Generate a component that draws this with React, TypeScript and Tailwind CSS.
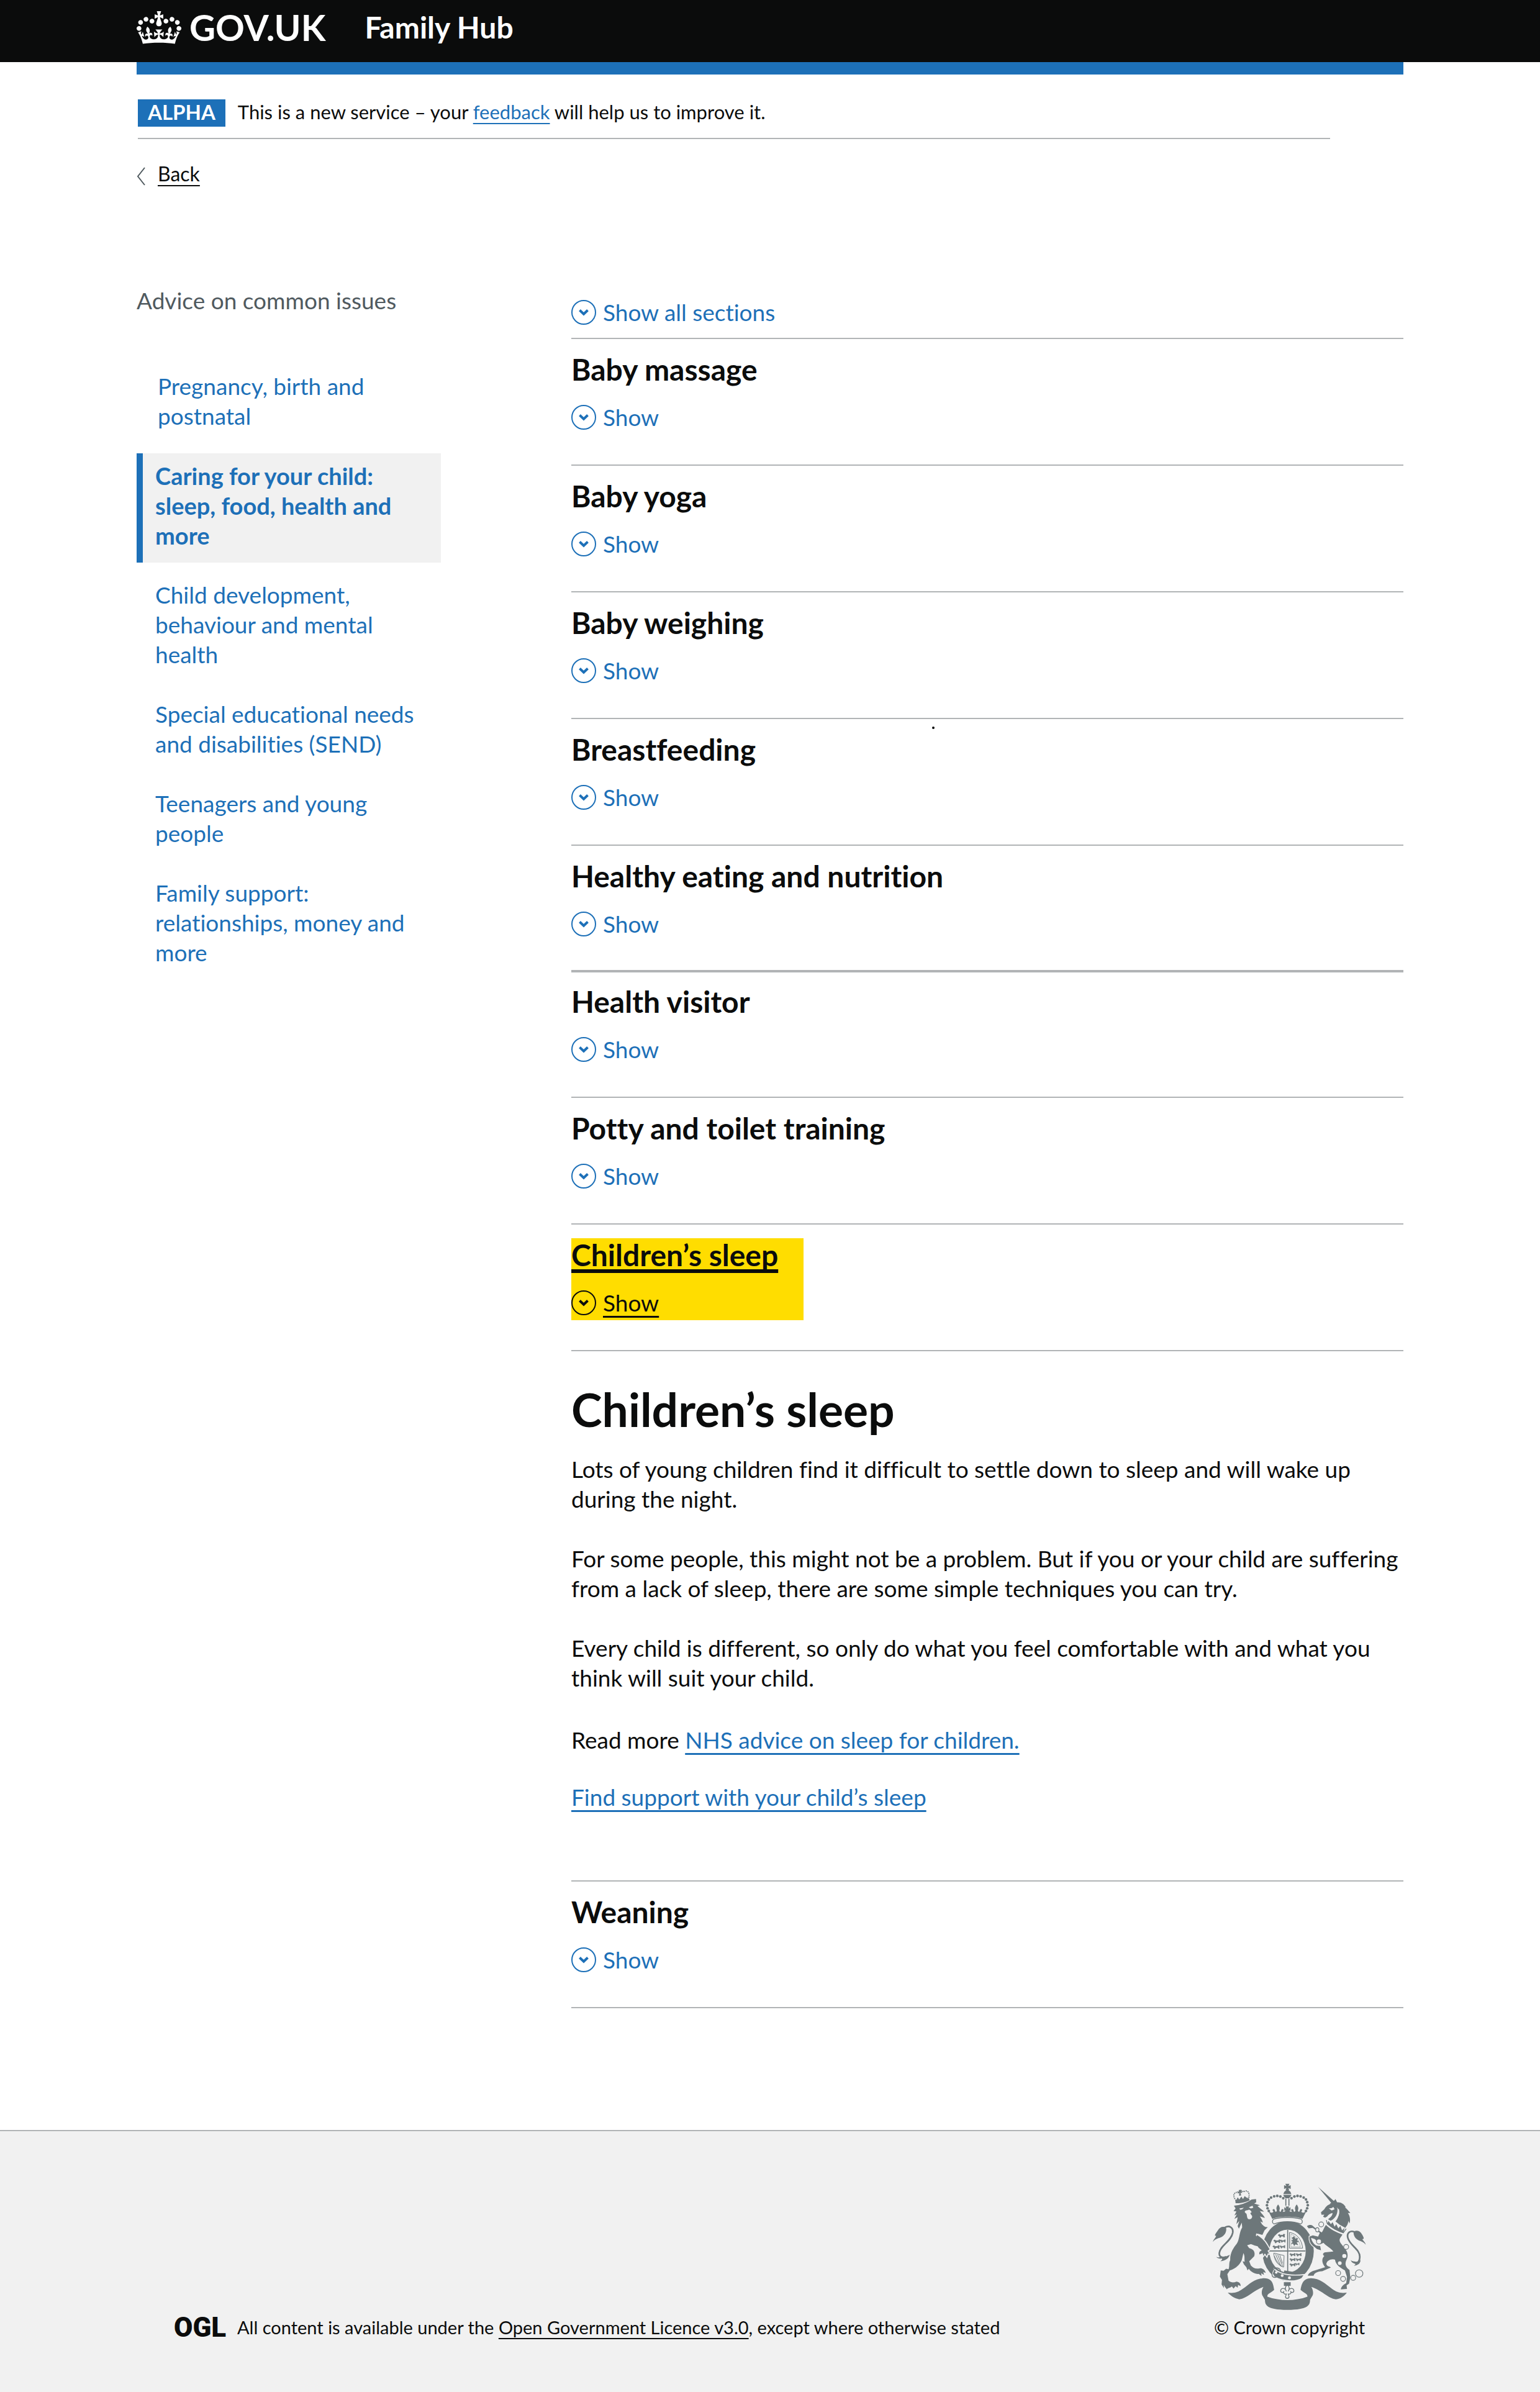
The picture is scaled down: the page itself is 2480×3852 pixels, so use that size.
import type { ReactNode } from "react";

type Topic = { title: string; focused?: boolean; heavyRule?: boolean; tight?: boolean; mark?: boolean };

const topics: Topic[] = [
  { title: "Baby massage" },
  { title: "Baby yoga" },
  { title: "Baby weighing" },
  { title: "Breastfeeding", mark: true },
  { title: "Healthy eating and nutrition", tight: true },
  { title: "Health visitor", heavyRule: true },
  { title: "Potty and toilet training" },
  { title: "Children’s sleep", focused: true },
];

const adviceLinks = [
  "Pregnancy, birth and postnatal",
  "Caring for your child: sleep, food, health and more",
  "Child development, behaviour and mental health",
  "Special educational needs and disabilities (SEND)",
  "Teenagers and young people",
  "Family support: relationships, money and more",
];

function CrownLogo() {
  return (
    <svg viewBox="0 0 132 97" className="mt-1 h-[53px] w-[72px] shrink-0" fill="currentColor" fillRule="evenodd" aria-hidden="true">
      <path d="M25 30.2c3.5 1.5 7.7-.2 9.1-3.7 1.5-3.6-.2-7.8-3.9-9.2-3.6-1.4-7.6.3-9.1 3.9-1.4 3.5.3 7.5 3.9 9zM9 39.5c3.6 1.5 7.8-.2 9.2-3.7 1.5-3.6-.2-7.8-3.9-9.1-3.6-1.5-7.6.2-9.1 3.8-1.4 3.5.3 7.5 3.8 9zM4.4 57.2c3.5 1.5 7.7-.2 9.1-3.8 1.5-3.6-.2-7.7-3.9-9.1-3.5-1.5-7.6.3-9.1 3.8-1.4 3.5.3 7.6 3.9 9.1zm38.3-21.4c3.5 1.5 7.7-.2 9.1-3.8 1.5-3.6-.2-7.7-3.9-9.1-3.6-1.5-7.6.3-9.1 3.8-1.3 3.6.4 7.7 3.9 9.1zm64.4-5.6c-3.6 1.5-7.8-.2-9.1-3.7-1.5-3.6.2-7.8 3.8-9.2 3.6-1.4 7.7.3 9.2 3.9 1.3 3.5-.4 7.5-3.9 9zm15.9 9.3c-3.6 1.5-7.7-.2-9.1-3.7-1.5-3.6.2-7.8 3.7-9.1 3.6-1.5 7.7.2 9.2 3.8 1.5 3.5-.3 7.5-3.8 9zm4.7 17.7c-3.6 1.5-7.8-.2-9.2-3.8-1.5-3.6.2-7.7 3.9-9.1 3.6-1.5 7.7.3 9.2 3.8 1.3 3.5-.4 7.6-3.9 9.1zM89.3 35.8c-3.6 1.5-7.8-.2-9.2-3.8-1.4-3.6.2-7.7 3.9-9.1 3.6-1.5 7.7.3 9.2 3.8 1.4 3.6-.3 7.7-3.9 9.1zM69.7 17.7l8.9 4.7V9.3l-8.9 2.8c-.2-.3-.5-.6-.9-.9L72.4 0H59.6l3.5 11.2c-.3.3-.6.5-.9.9l-8.8-2.8v13.1l8.8-4.7c.3.3.6.7.9.9l-5 15.4v.1c-.2.8-.4 1.6-.4 2.4 0 4.1 3.1 7.5 7 8.1h.2c.3 0 .7.1 1 .1.4 0 .7 0 1-.1h.2c4-.6 7.1-4.1 7.1-8.1 0-.8-.1-1.7-.4-2.4V34l-5.1-15.4c.4-.2.7-.6 1-.9zM66 92.8c16.9 0 32.8 1.1 47.1 3.2 4-16.9 8.9-26.7 14-33.5l-9.6-3.4c1 4.9 1.1 7.2 0 10.2-1.5-1.4-3-4.3-4.2-8.7L108.6 76c2.8-2 5-3.2 7.5-3.3-4.4 9.4-10 11.9-13.6 11.2-4.3-.8-6.3-4.6-5.6-7.9 1-4.7 5.7-5.9 8-.5 4.3-8.7-3-11.4-7.6-8.8 7.1-7.2 7.9-13.5 2.1-21.1-8 6.1-8.1 12.3-4.5 20.8-4.7-5.4-12.1-2.5-9.5 6.2 3.4-5.2 7.9-2 7.2 3.1-.6 4.3-6.4 7.8-13.5 7.2-10.3-.9-10.9-8-11.2-13.8 2.5-.5 7.1 1.8 11 7.3L80.2 60c-4.1 4.4-8 5.3-12.3 5.4 1.4-4.4 8-11.6 8-11.6H55.5s6.4 7.2 7.9 11.6c-4.2-.1-8-1-12.3-5.4l1.4 16.4c3.9-5.5 8.5-7.7 10.9-7.3-.3 5.8-.9 12.8-11.1 13.8-7.2.6-12.9-2.9-13.5-7.2-.7-5 3.8-8.3 7.1-3.1 2.7-8.7-4.6-11.6-9.4-6.2 3.7-8.5 3.6-14.7-4.6-20.8-5.8 7.6-5 13.9 2.2 21.1-4.7-2.6-11.9.1-7.7 8.8 2.3-5.5 7.1-4.2 8.1.5.7 3.3-1.3 7.1-5.7 7.9-3.5.7-9-1.8-13.5-11.2 2.5.1 4.7 1.3 7.5 3.3l-4.7-15.4c-1.2 4.4-2.7 7.2-4.3 8.7-1.1-3-.9-5.3 0-10.2l-9.5 3.4c5 6.9 9.9 16.7 14 33.5 14.8-2.1 30.8-3.2 47.7-3.2z" />
    </svg>
  );
}

function ChevronCircle() {
  return (
    <svg viewBox="0 0 40 40" className="h-10 w-10 shrink-0" fill="none" stroke="currentColor" aria-hidden="true">
      <circle cx="20" cy="20" r="19" strokeWidth="2" />
      <path d="M13.5 16.5L20 22.8L26.5 16.5" strokeWidth="4" />
    </svg>
  );
}

const beads: [number, number][] = [
  [437, 178], [423, 170], [408, 167], [393, 169], [378, 175], [367, 184], [361, 197], [358, 212], [361, 227], [367, 240],
];

const lionPassant = "M0 4l6-4 5 4 12 0 4-5 6 2-3 5 2 7-5 1-2-5-10 0-3 6-5-1 2-7-4 1z";

function RoyalArms() {
  return (
    <svg viewBox="96 106 742 614" className="h-[204px] w-[247px]" fill="#6d777a" stroke="none" role="img" aria-label="Royal coat of arms">
      {/* motto scroll */}
      <path d="M168 636C200 640 218 634 240 618C275 592 300 566 345 566C384 567 388 592 393 622C372 640 358 642 360 655C420 677 495 677 554 655C556 642 542 640 521 622C526 592 534 567 571 566C614 566 640 592 674 618C696 634 714 640 745 636C734 652 716 666 692 668C655 664 620 622 573 608C580 620 584 634 580 648L567 670C566 696 560 718 457 719C354 718 350 696 348 670L335 648C330 634 334 620 341 608C296 622 262 664 224 668C202 665 184 652 168 636Z" />

      {/* garter and shield */}
      <ellipse cx="460" cy="434" rx="125" ry="146" />
      <ellipse cx="458" cy="434" rx="88" ry="104" fill="#f1f1f1" />
      <path d="M456 331h5v204h-5zM371 431h174v5H371z" />
      <path d="M442 528l38 6-2 12-38-8z" />
      <g fill="none" stroke="#6d777a" strokeWidth="3">
        <path d="M467 344c34 4 60 34 64 76h-64z" />
        <path d="M474 352c24 8 42 32 46 62h-46z" strokeWidth="1.5" />
        <path d="M391 444l50 12 -2 56c-28-8-46-32-48-68zM400 450l26 58M410 452l24 54M420 454l14 40M394 458c10 24 20 40 40 52" />
      </g>
      <path d="M478 370l12-8 6 12 12-4-4 12 10 8-12 2 8 14-14-4-6 8-6-12-10 4 8-12-6-8 8-2z" />
      <g stroke="#6d777a" strokeWidth="2.5">
        <path d={lionPassant} transform="translate(412 353)" />
        <path d={lionPassant} transform="translate(390 380)" />
        <path d={lionPassant} transform="translate(422 380) scale(.8)" />
        <path d={lionPassant} transform="translate(386 408)" />
        <path d={lionPassant} transform="translate(420 408) scale(.8)" />
        <path d={lionPassant} transform="translate(468 446) scale(.85)" />
        <path d={lionPassant} transform="translate(498 446) scale(.85)" />
        <path d={lionPassant} transform="translate(468 470) scale(.85)" />
        <path d={lionPassant} transform="translate(497 470) scale(.8)" />
        <path d={lionPassant} transform="translate(468 495) scale(.85)" />
        <path d={lionPassant} transform="translate(494 493) scale(.65)" />
      </g>

      {/* strap and buckle */}
      <path d="M392 520C420 545 470 556 540 548L528 566C500 584 440 584 394 560L384 544Z" stroke="#f1f1f1" strokeWidth="5" />
      <path d="M384 556C378 530 392 514 408 516C420 518 424 526 424 534M384 556C392 566 404 562 408 556" fill="none" stroke="#6d777a" strokeWidth="4" />
      <circle cx="403" cy="538" r="6" fill="#f1f1f1" />
      <circle cx="432" cy="553" r="7" fill="#f1f1f1" />
      <circle cx="467" cy="564" r="7" fill="#f1f1f1" />
      <path d="M440 585h33v18h-33z" />
      <path d="M457 597c-12 10-12 22-5 32-4-16-22-18-27-6-3 11 8 15 14 9-2 10 6 12 13 10 0 6-4 8-4 13a8 8 0 0 0 17 0c0-5-4-7-4-13 7 2 15 0 13-10 6 6 17 2 14-9-5-12-23-10-27 6 7-10 7-22-4-32z" fill="#f1f1f1" stroke="#6d777a" strokeWidth="4" />

      {/* imperial crown */}
      <path d="M447 108h20l-5 11 11-4v18l-11-4 4 11h-18l4-11-11 4v-18l11 4z" />
      <path d="M438 158c2-12 10-19 19-19s17 7 19 19zM437 162h40c-3 8-9 14-12 16h-16c-4-2-10-8-12-16z" />
      <path d="M447 180h5v34h-5zM462 180h5v34h-5z" />
      {beads.map(([x, y]) => (
        <g key={`${x}-${y}`}>
          <circle cx={x} cy={y} r="6.5" />
          <circle cx={914 - x} cy={y} r="6.5" />
        </g>
      ))}
      <path d="M366 242C380 250 384 250 390 243C383 238 384 230 392 231C398 233 396 242 400 244C404 244 407 240 405 234C402 226 405 216 412 208C419 216 422 226 419 234C417 240 420 244 424 244C428 242 426 233 432 231C440 230 441 238 434 243C442 246 446 242 448 236L442 240V222L452 228L448 218H466L462 228L472 222V240L466 236C468 242 472 246 480 243C473 238 474 230 482 231C488 233 486 242 490 244C494 244 497 240 495 234C492 226 495 216 502 208C509 216 512 226 509 234C507 240 510 244 514 244C518 242 516 233 522 231C530 230 531 238 524 243C530 250 534 250 548 242L530 278C500 264 414 264 384 278Z" />
      <path d="M392 279C430 268 484 268 522 279C532 284 532 298 522 303C484 288 430 288 392 303C382 298 382 284 392 279Z" fill="#f1f1f1" stroke="#6d777a" strokeWidth="4" />

      {/* lion */}
      <path d="M150 322C176 306 196 320 192 346C184 388 130 408 127 444C126 462 140 470 160 462" fill="none" stroke="#6d777a" strokeWidth="8" />
      <path d="M96 390C98 378 108 372 112 360C98 362 112 346 120 334C130 316 148 312 160 322C164 342 152 360 134 368C118 374 106 376 96 390ZM112 462C122 468 132 462 142 464C154 462 168 458 178 452C172 470 158 480 132 484C140 478 142 474 140 470C130 472 120 472 112 462Z" />
      <path d="M198 214C226 212 258 202 284 184L305 182L306 198L296 204L324 212L312 216C322 226 336 234 344 244L324 240C330 252 342 260 348 274L324 266C330 276 336 284 338 296L326 290C334 306 344 320 362 318L346 334L336 356L312 350L300 408L288 398L262 406L272 420C296 426 302 442 296 460L272 484L280 504C290 516 304 522 322 518C338 516 350 528 352 540L340 536L344 550L330 542L332 555L318 545C300 546 280 536 270 520L264 528L258 512L246 498L240 484L250 486C248 472 252 460 244 444L236 478C228 498 208 520 178 528L166 546L172 578C184 588 198 588 210 582C224 584 232 592 230 604L218 598L216 612L206 604L196 616L188 606C180 614 168 612 164 620L156 610L148 598L150 614L138 596L140 574L130 558L134 528L148 530L160 520L172 522C178 508 172 494 180 478C178 444 196 418 212 398C226 378 222 346 238 320L236 296L222 326L216 314L224 288L210 304L216 270L200 278L212 256L200 262L210 242L196 240L206 228Z" />
      <path d="M308 352C332 366 352 386 362 406L374 426L364 434L376 452L364 448L358 464L348 450L338 464L336 448L320 454C316 444 320 434 328 430L316 420L300 394Z" stroke="#f1f1f1" strokeWidth="5" />
      <path d="M290 352L306 360L322 378L318 412L300 408L280 400Z" />
      <path d="M264 236C252 236 246 244 254 250C264 254 258 268 266 278C278 284 288 276 286 264C280 254 272 250 284 246C280 236 272 230 264 236ZM224 228L246 224L238 232L228 234ZM270 222L288 214L292 224L280 228Z" fill="#f1f1f1" />
      <path d="M204 184C226 192 252 184 270 176L274 188C256 198 226 204 206 202Z" />
      <path d="M203 182C192 164 198 148 216 150C222 140 236 138 244 148C264 134 276 152 270 176" fill="none" stroke="#6d777a" strokeWidth="6" strokeDasharray="5 4" />
      <path d="M222 138l12-1-3 8 6 0v8l-7-2 3 14-10 1 1-14-7 4v-8l6-1zM210 186l6-12 8 10 10-14 8 12 8-14 10 8 4-2-2 12-50 8z" />

      {/* unicorn */}
      <path d="M606 123L692 200L676 208Z" />
      <path d="M662 206C674 196 684 192 690 182L698 198C716 196 732 206 740 222L736 222C748 232 758 244 762 250L750 250C760 262 764 284 758 300L752 288C752 304 744 312 738 322L710 306L690 290C706 274 708 252 706 236C700 218 682 214 662 206Z" />
      <path d="M660 208C678 204 700 214 700 234C700 258 688 276 668 288L654 280C666 272 676 262 676 250C664 252 656 258 650 266L640 272L630 268L636 258L622 258L620 246L636 232C640 222 650 212 660 208Z" />
      <path d="M658 228L672 226L680 220L686 232L672 238Z" fill="#f1f1f1" />
      <path d="M704 232C712 262 690 286 664 290" fill="none" stroke="#f1f1f1" strokeWidth="6" />
      <path d="M646 284L650 300C676 322 700 336 728 346L742 326" fill="none" stroke="#6d777a" strokeWidth="4" />
      <path d="M650 304L656 288L668 304L676 294L686 316L694 304L704 324L714 312L722 334L734 322L728 346C698 338 672 324 650 304Z" />
      <path d="M644 308C664 328 694 344 724 354L712 372C704 388 722 402 738 424C752 444 752 462 742 480C734 500 742 514 758 526L762 562L756 592L744 600L746 618L716 620C718 606 730 596 742 590L746 560L736 528C716 516 690 500 688 476C672 470 646 480 646 498C650 510 664 508 668 514L626 532C600 534 588 540 584 554H556C558 542 574 532 590 528L640 512C626 496 620 472 636 458C626 452 628 442 642 440L680 436C668 420 646 410 632 394L616 402L590 376L572 370C574 384 584 400 598 408L616 410L620 430L600 424L588 414C570 402 562 386 564 364L580 358L606 364L614 346L600 336L580 322L560 324L552 314C562 306 574 306 582 314L606 334L624 344C632 332 636 318 644 308Z" stroke="#f1f1f1" strokeWidth="8" paintOrder="stroke" />
      <circle cx="733" cy="458" r="10" fill="#f1f1f1" />
      <circle cx="711" cy="493" r="9" fill="#f1f1f1" />
      <g fill="#f1f1f1" stroke="#6d777a" strokeWidth="3.5">
        <circle cx="621" cy="305" r="12" />
        <ellipse cx="602" cy="331" rx="8" ry="10" />
        <circle cx="610" cy="388" r="12" />
        <circle cx="742" cy="414" r="12" />
        <circle cx="703" cy="541" r="12" />
        <circle cx="727" cy="569" r="12" />
        <circle cx="776" cy="564" r="12" />
        <circle cx="805" cy="543" r="18" />
      </g>
      <path d="M788 344C762 330 744 346 750 370C760 408 808 424 808 462C808 482 800 492 786 494" fill="none" stroke="#6d777a" strokeWidth="8" />
      <path d="M837 404C834 390 826 386 820 376C834 378 824 362 818 352C808 334 790 332 778 340C776 358 786 374 802 382C816 388 828 390 837 404ZM764 478C772 486 780 484 790 486C800 486 806 484 812 478C810 496 800 502 780 506C788 500 788 496 786 496C776 494 768 490 764 478Z" />
    </svg>
  );
}

function ShowButton({ label, about, focused }: { label: string; about?: string; focused?: boolean }) {
  return (
    <button
      type="button"
      aria-label={about ? `${label} ${about}` : label}
      className={focused ? "flex h-12 items-center gap-[11px] text-[#0b0c0c]" : "flex h-12 items-center gap-[11px] text-[#1d70b8]"}
    >
      <ChevronCircle />
      <span className={focused ? "underline decoration-3 underline-offset-7" : ""}>{label}</span>
    </button>
  );
}

function TopicSection({ topic }: { topic: Topic }) {
  const rule = topic.heavyRule
    ? "relative border-t-4 border-[#b1b4b6] pt-5 pb-12"
    : topic.tight
      ? "relative border-t-2 border-[#b1b4b6] pt-[22px] pb-[46px]"
      : "relative border-t-2 border-[#b1b4b6] pt-[22px] pb-12";
  return (
    <section className={rule}>
      <div className={topic.focused ? "w-[374px] bg-[#ffdd00] pb-1" : "pb-1"}>
        <h2
          className={
            topic.focused
              ? "text-[48px] leading-[54px] font-bold underline decoration-6 underline-offset-5 [text-decoration-skip-ink:none]"
              : "text-[48px] leading-[54px] font-bold"
          }
        >
          {topic.title}
        </h2>
        <div className="mt-[26px]">
          <ShowButton label="Show" about={topic.title} focused={topic.focused} />
        </div>
      </div>
      {topic.mark && <span className="absolute top-3 left-[581px] h-1 w-1 rounded-full bg-[#0b0c0c]" />}
    </section>
  );
}

function BodyLink({ children }: { children: ReactNode }) {
  return (
    <a href="#" className="text-[#1d70b8] underline decoration-3 underline-offset-7 [text-decoration-skip-ink:none]">
      {children}
    </a>
  );
}

export default function App() {
  return (
    <div className="min-h-screen bg-white font-['Lato',sans-serif] text-[37px] leading-12 text-[#0b0c0c] [font-variant-ligatures:none]">
      <header className="bg-[#0b0c0c] text-white">
        <div className="mx-auto flex h-[100px] max-w-[2040px] items-start pt-[14px] font-bold">
          <a href="#" className="flex items-start gap-[13px] text-[58px] leading-[60px]">
            <CrownLogo />
            <span>GOV.UK</span>
          </a>
          <a href="#" className="ml-[63px] text-[48px] leading-[60px]">Family Hub</a>
        </div>
      </header>

      <div className="mx-auto max-w-[2040px]">
        <div className="h-5 bg-[#1d70b8]" />

        <div className="mt-10 ml-0.5 flex max-w-[1920px] items-start border-b-2 border-[#b1b4b6] pb-[18px]">
          <strong className="h-11 bg-[#1d70b8] px-4 text-[33px] leading-10 font-bold text-white">ALPHA</strong>
          <p className="ml-5 text-[31px] leading-10">
            This is a new service – your{" "}
            <a href="#" className="text-[#1d70b8] underline decoration-2 underline-offset-6">feedback</a> will help us to improve it.
          </p>
        </div>

        <a href="#" className="mt-9 flex w-fit items-center gap-5 text-[32px] leading-10">
          <svg viewBox="0 0 14 30" className="mt-2 h-[30px] w-[14px]" fill="none" stroke="#505a5f" strokeWidth="2" aria-hidden="true">
            <path d="M13 1L2 15L13 29" />
          </svg>
          <span className="underline decoration-2 underline-offset-6">Back</span>
        </a>

        <div className="mt-40 grid grid-cols-[490px_minmax(0,1fr)] gap-[210px]">
          <nav aria-labelledby="advice-title">
            <h2 id="advice-title" className="text-[#505a5f]">Advice on common issues</h2>
            <ul className="mt-[78px] flex flex-col gap-4">
              {adviceLinks.map((label, i) => (
                <li
                  key={label}
                  className={
                    i === 1
                      ? "border-l-10 border-[#1d70b8] bg-[#f1f1f1] pt-3 pr-8 pb-5 pl-5 text-[38px] font-bold"
                      : i === 0
                        ? "border-l-10 border-transparent pt-3 pr-8 pb-5 pl-6"
                        : "border-l-10 border-transparent pt-3 pr-8 pb-5 pl-5"
                  }
                >
                  <a href="#" className="block text-[#1d70b8]" aria-current={i === 1 ? "page" : undefined}>{label}</a>
                </li>
              ))}
            </ul>
          </nav>

          <main className="pt-[19px]">
            <div className="mb-[17px]">
              <ShowButton label="Show all sections" />
            </div>

            {topics.map((topic) => (
              <TopicSection key={topic.title} topic={topic} />
            ))}

            <article className="border-t-2 border-[#b1b4b6] pt-[53px] pb-[110px]">
              <h1 className="text-[75px] leading-20 font-bold">Children’s sleep</h1>
              <div className="mt-[33px] flex flex-col gap-12">
                <p>Lots of young children find it difficult to settle down to sleep and will wake up during the night.</p>
                <p>For some people, this might not be a problem. But if you or your child are suffering from a lack of sleep, there are some simple techniques you can try.</p>
                <p>Every child is different, so only do what you feel comfortable with and what you think will suit your child.</p>
              </div>
              <p className="mt-[52px]">
                Read more <BodyLink>NHS advice on sleep for children.</BodyLink>
              </p>
              <p className="mt-11">
                <BodyLink>Find support with your child’s sleep</BodyLink>
              </p>
            </article>

            <TopicSection topic={{ title: "Weaning" }} />
            <hr className="border-t-2 border-[#b1b4b6]" />
          </main>
        </div>
      </div>

      <footer className="mt-[196px] border-t-2 border-[#b1b4b6] bg-[#f1f1f1] py-[84px] text-[29px] leading-10">
        <div className="mx-auto flex max-w-[1920px] items-end justify-between">
          <div className="flex items-center">
            <span className="w-[102px] font-['Roboto',sans-serif] text-[44px] font-black">OGL</span>
            <p>
              All content is available under the{" "}
              <a href="#" className="underline decoration-2 underline-offset-6 [text-decoration-skip-ink:none]">Open Government Licence v3.0</a>, except where otherwise stated
            </p>
          </div>
          <a href="#" className="flex flex-col items-center gap-2">
            <RoyalArms />
            <span>© Crown copyright</span>
          </a>
        </div>
      </footer>
    </div>
  );
}
